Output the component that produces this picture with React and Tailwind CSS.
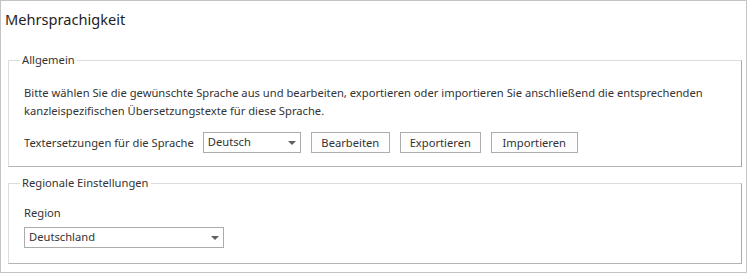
import React from "react";

const font = { fontFamily: '"Segoe UI", "Noto Sans", sans-serif' };

// small dropdown that looks like a WPF combobox
const Combo = ({ value, width }) => (
  <div className={`relative flex items-center h-[21px] ${width} border border-[#acacac] bg-white pl-[4px] text-[11.2px] text-[#333]`}>
    <span>{value}</span>
    <svg className="absolute right-[4px] top-[8px]" width="8" height="4" viewBox="0 0 8 4">
      <path d="M0 0 L8 0 L4 4 Z" fill="#606060" />
    </svg>
  </div>
);

const Btn = ({ children, width }) => (
  <button className={`h-[21px] ${width} border border-[#adadad] bg-[#fdfdfd] text-[11.2px] leading-[16px] text-[#333] text-center`}>
    {children}
  </button>
);

export default function App() {
  return (
    <div className="w-[747px] h-[274px] bg-white" style={font}>
      <div className="w-[747px] h-[273px] border border-[#c4c4c4] flex flex-col">
        <div className="pt-[8px] pl-[4px] text-[14.6px] leading-[20px] text-[#1e1e1e]">Mehrsprachigkeit</div>

        {/* Allgemein */}
        <fieldset className="mt-[23px] ml-[7px] mr-[4px] border border-t-[#dcdcdc] border-l-[#dcdcdc] border-r-[#a8a8a8] border-b-[#b4b4b4]">
          <legend className="ml-[11px] px-[2px] text-[11.2px] leading-[16px] text-[#333]">Allgemein</legend>
          <div className="pt-[16px] pb-[13px] px-[15px] text-[11.2px] text-[#333]">
            <p className="leading-[18px] whitespace-nowrap">
              Bitte wählen Sie die gewünschte Sprache aus und bearbeiten, exportieren oder importieren Sie anschließend die entsprechenden
              <br />
              kanzleispezifischen Übersetzungstexte für diese Sprache.
            </p>
            <div className="mt-[12px] flex items-center">
              <span className="leading-[16px] mr-[9px]">Textersetzungen für die Sprache</span>
              <div className="flex items-center gap-[10px]">
                <Combo value="Deutsch" width="w-[98px]" />
                <Btn width="w-[79px]">Bearbeiten</Btn>
                <Btn width="w-[81px]">Exportieren</Btn>
                <Btn width="w-[87px]">Importieren</Btn>
              </div>
            </div>
          </div>
        </fieldset>

        {/* Regionale Einstellungen */}
        <fieldset className="mt-[8px] ml-[7px] mr-[4px] border border-t-[#dcdcdc] border-l-[#dcdcdc] border-r-[#a8a8a8] border-b-[#b4b4b4]">
          <legend className="ml-[11px] px-[2px] text-[11.2px] leading-[16px] text-[#333]">Regionale Einstellungen</legend>
          <div className="pt-[14px] pb-[15px] px-[15px] text-[11.2px] text-[#333]">
            <div className="leading-[16px]">Region</div>
            <div className="mt-[6px]">
              <Combo value="Deutschland" width="w-[200px]" />
            </div>
          </div>
        </fieldset>
      </div>
    </div>
  );
}
